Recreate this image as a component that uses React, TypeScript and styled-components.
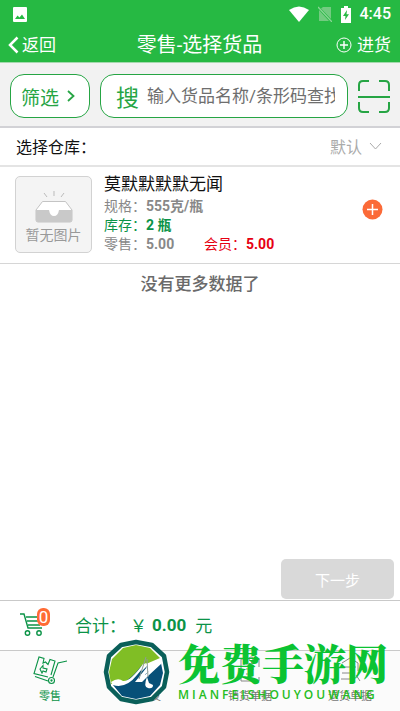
import React from "react";
import styled, { createGlobalStyle } from "styled-components";

const GlobalStyle = createGlobalStyle`
  * { box-sizing: border-box; }
  body {
    margin: 0;
    background: #fff;
    font-family: Roboto, "Noto Sans CJK SC", sans-serif;
    font-weight: 400;
    color: #111;
  }
  button, input { font: inherit; }
  svg { display: block; flex: none; }
`;

const green = "#26a544";
const deepGreen = "#0b9347";

const Page = styled.div`
  display: flex;
  flex-direction: column;
  min-height: 100vh;
`;

const PlainButton = styled.button`
  display: flex;
  align-items: center;
  border: 0;
  padding: 0;
  background: none;
  color: inherit;
  cursor: pointer;
`;

const Top = styled.header`
  background: #26b943;
  color: #fff;
  border-bottom: 1px solid #a5d9ae;
`;

const StatusBar = styled.div`
  display: flex;
  align-items: center;
  height: 28px;
  padding: 0 9px 0 13px;
`;

const StatusIcons = styled.div`
  display: flex;
  align-items: center;
  gap: 9px;
  margin-left: auto;
`;

const Clock = styled.time`
  font-size: 16px;
  font-weight: 500;
  line-height: 20px;
`;

const TitleBar = styled.div`
  display: grid;
  grid-template-columns: 1fr auto 1fr;
  align-items: center;
  height: 34px;
  padding: 0 9px 0 8px;
`;

const Title = styled.h1`
  margin: 0;
  font-size: 20px;
  font-weight: 400;
  line-height: 28px;
`;

const BarButton = styled(PlainButton)<{ $end?: boolean }>`
  justify-self: ${(p) => (p.$end ? "end" : "start")};
  gap: ${(p) => (p.$end ? 5 : 3)}px;
  font-size: 17px;
  line-height: 24px;
`;

const SearchBar = styled.form`
  display: flex;
  align-items: center;
  gap: 10px;
  padding: 11px 10px 8px;
  background: #f2f2f2;
  border-bottom: 2px solid #d2d2d6;
`;

const FilterButton = styled(PlainButton)`
  flex: none;
  width: 80px;
  height: 44px;
  padding: 0 10px;
  gap: 8px;
  border: 1px solid ${green};
  border-radius: 14px;
  background: #fff;
  color: ${green};
  font-size: 19px;
`;

const SearchBox = styled.div`
  display: flex;
  align-items: center;
  gap: 8px;
  flex: 1;
  min-width: 0;
  height: 44px;
  padding: 0 12px 0 15px;
  border: 1px solid ${green};
  border-radius: 14px;
  background: #fff;
`;

const SearchButton = styled(PlainButton)`
  color: ${green};
  font-size: 23px;
`;

const SearchInput = styled.input`
  flex: 1;
  min-width: 0;
  height: 40px;
  padding: 0;
  border: 0;
  outline: 0;
  background: none;
  font-size: 17px;
  &::placeholder { color: #6e6e6e; opacity: 1; }
`;

const WarehouseRow = styled.div`
  display: flex;
  align-items: center;
  justify-content: space-between;
  height: 39px;
  padding: 0 18px 1px 16px;
  border-bottom: 2px solid #e4e4e4;
  font-size: 16px;
`;

const WarehousePicker = styled(PlainButton)`
  gap: 7px;
  color: #aaa;
`;

const Main = styled.main`
  display: flex;
  flex-direction: column;
  flex: 1;
`;

const Product = styled.article`
  display: flex;
  align-items: center;
  gap: 12px;
  padding: 8px 17px 9px 15px;
  border-bottom: 1px solid #d6d6d6;
`;

const Thumb = styled.div`
  display: flex;
  flex-direction: column;
  align-items: center;
  flex: none;
  width: 77px;
  height: 77px;
  padding-top: 14px;
  border: 1px solid #d2d2d2;
  border-radius: 5px;
  background: #f4f4f4;
  color: #999;
  font-size: 14px;
  line-height: 24px;
`;

const Details = styled.div`
  flex: 1;
`;

const ProductName = styled.h2`
  margin: 0 0 4px;
  font-size: 17px;
  font-weight: 400;
  line-height: 18px;
`;

const Line = styled.div<{ $tone?: string }>`
  display: flex;
  color: ${(p) => p.$tone || "#888"};
  font-size: 14px;
  line-height: 19px;
`;

const Field = styled.span<{ $tone?: string }>`
  min-width: 100px;
  color: ${(p) => p.$tone || "inherit"};
`;

const AddButton = styled(PlainButton)`
  margin-bottom: 10px;
`;

const EndText = styled.p`
  margin: 8px 0 0;
  text-align: center;
  color: #6a6a6a;
  font-size: 17px;
  font-weight: 500;
  line-height: 24px;
`;

const NextButton = styled.button`
  width: 113px;
  height: 40px;
  margin: auto 6px 1px auto;
  border: 0;
  border-radius: 5px;
  background: #d9d9d9;
  color: #fff;
  font-size: 15px;
`;

const TotalBar = styled.section`
  display: flex;
  align-items: center;
  height: 50px;
  padding: 0 0 2px 20px;
  border-top: 1px solid #c9c9c9;
  color: ${deepGreen};
  font-size: 17px;
`;

const CartButton = styled(PlainButton)`
  position: relative;
  width: 55px;
  height: 30px;
`;

const Badge = styled.span`
  position: absolute;
  top: -2px;
  left: 17px;
  width: 13px;
  height: 18px;
  border-radius: 6px;
  background: #ff6b35;
  color: #fff;
  font-size: 17px;
  line-height: 18px;
  text-align: center;
`;

const Currency = styled.span`
  margin-left: 4px;
`;

const Amount = styled.strong`
  margin: 0 9px 0 5px;
  font-weight: 700;
`;

const Bottom = styled.footer`
  position: relative;
`;

const Tabs = styled.nav`
  display: grid;
  grid-template-columns: repeat(4, 1fr);
  height: 61px;
  border-top: 1px solid #c9c9c9;
  background: #fbfbfb;
`;

const Tab = styled.a<{ $active?: boolean }>`
  display: flex;
  flex-direction: column;
  align-items: center;
  gap: 4px;
  padding-top: 4px;
  color: ${(p) => (p.$active ? deepGreen : "#777")};
  font-size: 11px;
  line-height: 16px;
  text-decoration: none;
`;

const Watermark = styled.div`
  position: absolute;
  right: 12px;
  bottom: 6px;
  display: flex;
  align-items: flex-end;
  gap: 8px;
  color: #0bc332;
  pointer-events: none;
`;

const Brand = styled.div`
  display: flex;
  flex-direction: column;
`;

const BrandName = styled.span`
  font-family: "Noto Serif CJK SC", "Noto Sans CJK SC", serif;
  font-size: 42px;
  font-weight: 900;
  line-height: 46px;
`;

const BrandLatin = styled.span`
  color: #25bd22;
  font-family: "Open Sans", sans-serif;
  font-size: 12px;
  font-weight: 600;
  letter-spacing: 3px;
  line-height: 20px;
`;

const PictureIcon = () => (
  <svg width="14" height="15" viewBox="0 0 14 15">
    <rect width="14" height="15" rx="1" fill="#fff" />
    <path d="M2 12 4.5 8.5 6.5 10.5 9 7.5 12 12Z" fill="#26b943" />
  </svg>
);

const WifiIcon = () => (
  <svg width="20" height="16" viewBox="0 0 20 16">
    <path d="M0 4Q10-3 20 4L10 16Z" fill="#fff" />
  </svg>
);

const NoSimIcon = () => (
  <svg width="14" height="16" viewBox="0 0 14 16">
    <path d="M5 1H13V13L3 2.600Z M1 4 11 15H1Z" fill="#72cb80" />
    <path d="M0 1 14 16" stroke="#8bd596" strokeWidth="1.3" />
  </svg>
);

const BatteryIcon = () => (
  <svg width="10" height="17" viewBox="0 0 10 17">
    <path d="M3 0H7V2H10V17H0V2H3Z" fill="#fff" />
    <path d="M6 4 2 10H4.5L4 14 8 8.3H5.5Z" fill="#26b943" />
  </svg>
);

const BackIcon = () => (
  <svg width="11" height="18" viewBox="0 0 11 18" fill="none" stroke="#fff" strokeWidth="2.5">
    <path d="M9.5 1.5 2 9 9.5 16.5" />
  </svg>
);

const CirclePlusIcon = () => (
  <svg width="16" height="16" viewBox="0 0 16 16" fill="none" stroke="#fff">
    <circle cx="8" cy="8" r="7" />
    <path d="M4 8H12M8 4V12" strokeWidth="1.4" />
  </svg>
);

const RightIcon = () => (
  <svg width="8" height="12" viewBox="0 0 8 12" fill="none" stroke={green} strokeWidth="1.8">
    <path d="M1 1 6.5 6 1 11" />
  </svg>
);

const DownIcon = () => (
  <svg width="13" height="8" viewBox="0 0 13 8" fill="none" stroke="#aaa">
    <path d="M1 1 6.5 7 12 1" />
  </svg>
);

const ScanIcon = () => (
  <svg width="32" height="33" viewBox="0 0 32 33" fill="none" stroke={green} strokeWidth="2">
    <path d="M1 11V5Q1 1 5 1H11M21 1H27Q31 1 31 5V11M31 22V28Q31 32 27 32H21M11 32H5Q1 32 1 28V22M0 17H32" />
  </svg>
);

const TrayIcon = () => (
  <svg width="38" height="32" viewBox="0 0 38 32">
    <path d="M9 2 12 6M19 0V5M29 2 26 6" stroke="#bbb" fill="none" />
    <path d="M7.5 10.5H30.5L37 19V29Q37 31 35 31H3Q1 31 1 29V19Z" fill="#fff" stroke="#c4c4c4" />
    <path d="M1 19H14Q15 25 19 25T24 19H37V29Q37 31 35 31H3Q1 31 1 29Z" fill="#c9c9c9" />
  </svg>
);

const AddIcon = () => (
  <svg width="21" height="21" viewBox="0 0 21 21">
    <circle cx="10.5" cy="10.5" r="10" fill="#fb6a38" />
    <path d="M5 10.5H16M10.5 5V16" stroke="#fff" strokeWidth="1.5" />
  </svg>
);

const CartIcon = () => (
  <svg width="26" height="24" viewBox="0 0 26 24" fill="none" stroke={deepGreen} strokeWidth="1.4">
    <path d="M0 1H4L8 15H22M6 4H22M7 8H21M8 12H20" />
    <circle cx="7.5" cy="20" r="2.2" />
    <circle cx="19" cy="20" r="2.2" />
  </svg>
);

const TrolleyIcon = () => (
  <svg width="35" height="30" viewBox="0 0 35 30" fill="none" stroke={deepGreen} strokeWidth="1.1">
    <path d="M15 22 1 18.500 6 2 11 3.500 10 8 12.500 7 15 9.500 17 4.500 22 6 18 20M2 21.500 15 26M20 22 25 8 34 6" />
    <path d="M7 14 10 10.500V13L14 14 13 17 10 16 9 18Z" />
    <circle cx="18.5" cy="25.5" r="3" />
    <circle cx="18.5" cy="25.5" r=".6" />
  </svg>
);

const ShipmentIcon = () => (
  <svg width="30" height="30" viewBox="0 0 30 30" fill="none" stroke="#888">
    <path d="M5 9 15 4 25 9V22L15 27 5 22ZM5 9 15 14 25 9M15 14V27" />
  </svg>
);

const OrderIcon = () => (
  <svg width="24" height="30" viewBox="0 0 24 30" fill="none" stroke="#888">
    <path d="M8 4H3V26H21V22M17 4H21V12M8 9H14L13 5M8 14H16M8 19H13" />
    <circle cx="13" cy="4" r="2" />
  </svg>
);

const ReturnIcon = () => (
  <svg width="24" height="30" viewBox="0 0 24 30" fill="none" stroke="#888">
    <path d="M4 8 12 3 20 8M6 12H18M4 18H17M3 24H17M18 20 22 26M20 8V16" />
  </svg>
);

const BrandLogo = () => (
  <svg width="67" height="66" viewBox="0 0 67 66">
    <path
      d="M64 33 61 48 49 60 33 63 18 60 6 48 3 33 6 17 18 6 33 3 49 6 61 17Z"
      fill="#fff"
      stroke="#0a5f59"
      strokeWidth="4.500"
      strokeLinejoin="round"
    />
    <path d="M20 9 33 6 47 9 57 19 43 25 28 42 17 42 8 45 6 33 9 20Z" fill="#80be25" />
    <path d="M10 46Q23 47 39 26L38 33 44 27 41 36 58 24 60 34 57 46 47 57 33 60 19 57Z" fill="#075078" />
    <path d="M8 43Q15 38 20 42 27 43 40 25L44 24 34 36Q23 50 10 46Z" fill="#fff" />
    <path d="M32 43 44 28 42 36 59 20 58 25 45 37 39 43Z" fill="#fff" />
    <path d="M44 38Q40 48 45 49T50 46L46 44Z" fill="#fff" />
    <path d="M43 18 36 40M44 20 45 38" stroke="#8d9b96" />
  </svg>
);

export default function App() {
  return (
    <Page>
      <GlobalStyle />
      <Top>
        <StatusBar>
          <PictureIcon />
          <StatusIcons>
            <WifiIcon />
            <NoSimIcon />
            <BatteryIcon />
            <Clock>4:45</Clock>
          </StatusIcons>
        </StatusBar>
        <TitleBar>
          <BarButton type="button"><BackIcon />返回</BarButton>
          <Title>零售-选择货品</Title>
          <BarButton type="button" $end><CirclePlusIcon />进货</BarButton>
        </TitleBar>
      </Top>
      <SearchBar onSubmit={(e) => e.preventDefault()}>
        <FilterButton type="button">筛选<RightIcon /></FilterButton>
        <SearchBox>
          <SearchButton type="submit">搜</SearchButton>
          <SearchInput type="text" aria-label="输入货品名称/条形码查找" placeholder="输入货品名称/条形码查找" />
        </SearchBox>
        <PlainButton type="button" aria-label="扫码"><ScanIcon /></PlainButton>
      </SearchBar>
      <WarehouseRow>
        <span>选择仓库：</span>
        <WarehousePicker type="button">默认<DownIcon /></WarehousePicker>
      </WarehouseRow>
      <Main>
        <Product>
          <Thumb><TrayIcon />暂无图片</Thumb>
          <Details>
            <ProductName>莫默默默默无闻</ProductName>
            <Line>规格：<b>555克/瓶</b></Line>
            <Line $tone={deepGreen}>库存：<b>2 瓶</b></Line>
            <Line>
              <Field>零售：<b>5.00</b></Field>
              <Field $tone="#e60012">会员：<b>5.00</b></Field>
            </Line>
          </Details>
          <AddButton type="button" aria-label="添加"><AddIcon /></AddButton>
        </Product>
        <EndText>没有更多数据了</EndText>
        <NextButton type="button">下一步</NextButton>
      </Main>
      <TotalBar>
        <CartButton type="button" aria-label="购物车"><CartIcon /><Badge>0</Badge></CartButton>
        <span>合计：</span>
        <Currency>￥</Currency>
        <Amount>0.00</Amount>
        <span>元</span>
      </TotalBar>
      <Bottom>
        <Tabs>
          <Tab href="#retail" $active><TrolleyIcon />零售</Tab>
          <Tab href="#wholesale"><ShipmentIcon />批发</Tab>
          <Tab href="#sales"><OrderIcon />销货单据</Tab>
          <Tab href="#returns"><ReturnIcon />退货单据</Tab>
        </Tabs>
        <Watermark>
          <BrandLogo />
          <Brand>
            <BrandName>免费手游网</BrandName>
            <BrandLatin>MIANFEISHOUYOUWANG</BrandLatin>
          </Brand>
        </Watermark>
      </Bottom>
    </Page>
  );
}
